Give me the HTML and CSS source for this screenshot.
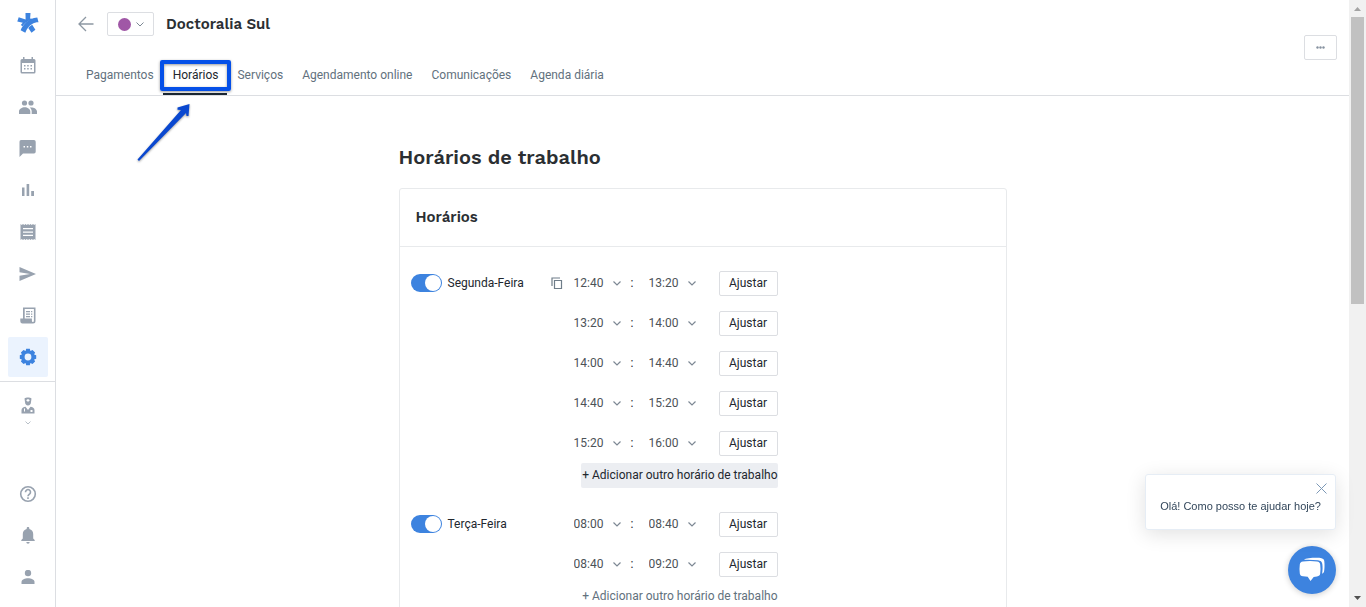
FILE: index.html
```
<!DOCTYPE html>
<html lang="pt-BR">
<head>
  <meta charset="UTF-8" />
  <meta name="viewport" content="width=device-width, initial-scale=1.0"/>
  <title>Doctoralia Sul - Horários</title>
  <link rel="stylesheet" href="styles.css">
</head>
<body>
  <aside class="sidebar">
    <a class="logo" href="#" aria-label="Início">
      <svg width="22" height="22" viewBox="0 0 22 22" fill="#3d83df">
        <path d="M8.500 1h5l-.4 5.800 1.400-.5-.3 1.500C10 9.300 7.500 11.500 5.500 14.300L3.800 13l2-2.300L.3 9.600l1.400-4.400 6.900 2.300z"/>
        <path d="M20.300 5.500l1.200 4.800c-2.500 0-4.700.6-6.300 1.600-3.200 2-5.200 4.300-6.900 8.800L3.600 18.300C6 12.500 11 6.500 20.300 5.500z"/>
        <path d="M15.200 12.800l3.200 5-3.900 3-3.200-4.700c1-1.500 2.200-2.500 3.900-3.300z"/>
      </svg>
    </a>
    <nav class="side-nav" aria-label="Principal">
      <a href="#" aria-label="Agenda">
        <svg width="16" height="18" viewBox="0 0 16 18"><path fill-rule="evenodd" d="M3 1h1.500v2h7V1H13v2h1a1.500 1.500 0 0 1 1.500 1.500V16a1.500 1.500 0 0 1-1.500 1.500H2A1.500 1.500 0 0 1 .5 16V4.500A1.500 1.500 0 0 1 2 3h1zM2 7v9h12V7z"/><path d="M4 9h1.500v1.500H4zm3.200 0h1.500v1.500H7.200zm3.300 0H12v1.500h-1.500zM4 12h1.500v1.500H4zm3.200 0h1.500v1.500H7.200zm3.300 0H12v1.500h-1.500z"/></svg>
      </a>
      <a href="#" aria-label="Pacientes">
        <svg width="18" height="14" viewBox="0 0 18 14"><circle cx="5.500" cy="3" r="2.600"/><circle cx="12" cy="3" r="2.600"/><path d="M0 14v-2.500C0 9 3 7.300 5.700 7.300S11.300 9 11.300 11.500V14zM12.700 14v-2.500c0-1.700-.8-3-2-4 3.300-.6 7.300 1 7.300 4V14z"/></svg>
      </a>
      <a href="#" aria-label="Mensagens">
        <svg width="17" height="17" viewBox="0 0 17 17"><path fill-rule="evenodd" d="M2 0h13a1.700 1.700 0 0 1 1.700 1.700v10A1.700 1.700 0 0 1 15 13.400H4L.5 17V1.700A1.700 1.700 0 0 1 2 0zm2.500 6v1.500H6V6zm3.300 0v1.500h1.500V6zM11 6v1.500h1.500V6z"/></svg>
      </a>
      <a href="#" aria-label="Estatísticas">
        <svg width="12" height="12" viewBox="0 0 12 12"><path d="M0 3.500h2.500V12H0zM4.600 0h2.600v12H4.600zM9.200 7H12v5H9.200z"/></svg>
      </a>
      <a href="#" aria-label="Faturas">
        <svg width="16" height="16" viewBox="0 0 16 16"><path fill-rule="evenodd" d="M.5 0l1.300 1L3 0l1.300 1 1.200-1 1.300 1L8 0l1.300 1 1.200-1 1.300 1L13 0l1.200 1 1.300-1v16l-1.300-1-1.200 1-1.200-1-1.300 1-1.200-1L8 16l-1.200-1-1.300 1-1.200-1L3 16l-1.200-1-1.300 1zM3 4v1.300h10V4zm0 3.400v1.300h10V7.400zm0 3.300V12h10v-1.300z"/></svg>
      </a>
      <a href="#" aria-label="Campanhas">
        <svg width="17" height="14" viewBox="0 0 17 14"><path d="M.5 0L17 7 .5 14V8.700L11 7 .5 5.300z"/></svg>
      </a>
      <a href="#" aria-label="Relatórios">
        <svg width="16" height="17" viewBox="0 0 16 17"><path fill-rule="evenodd" d="M3 .5h12.500V14a2.500 2.500 0 0 1-2.500 2.500H2.500A2.200 2.200 0 0 1 .3 14.300V11.500H3zM4.700 2v9.500h7.200V14a1 1 0 0 0 2 0V2z"/><path d="M6 4h4v1.300H6zm5 0h1.300v1.300H11zM6 6.500h4v1.300H6zm5 0h1.300v1.300H11zM6 9h4v1.300H6zm5 0h1.300v1.300H11z"/></svg>
      </a>
      <a class="active" href="#" aria-label="Configurações">
        <svg width="18" height="18" viewBox="0 0 18 18"><path fill-rule="evenodd" d="M7.200.8h3.600l.6 2.100 2.100-1 2.600 2.600-1 2.100 2.100.6v3.600l-2.100.6 1 2.100-2.600 2.600-2.100-1-.6 2.100H7.200l-.6-2.100-2.100 1-2.600-2.600 1-2.100-2.100-.6V7.200l2.100-.6-1-2.100 2.600-2.600 2.100 1zM9 5.600a3.400 3.400 0 1 0 0 6.800 3.400 3.400 0 0 0 0-6.800z"/></svg>
      </a>
    </nav>
    <a class="doctor" href="#" aria-label="Profissional">
      <svg width="14" height="17" viewBox="0 0 14 17"><path fill-rule="evenodd" d="M3.500 1.500C5 .3 9 .3 10.500 1.500L10 5c0 2-1.300 3.600-3 3.600S4 7 4 5zM6.400 2v.8h-.9V4h.9v.8h1.200V4h.9V2.800h-.9V2z"/><path fill-rule="evenodd" d="M.5 16.500V13c0-2 2-2.900 4-3.200L7 13l2.500-3.200c2 .3 4 1.200 4 3.200v3.500zM3 11.500v3h1v-3zm6.500 1.500v2h2v-2z"/></svg>
      <svg class="caret" width="6" height="4" viewBox="0 0 6 4"><path d="M.5.5L3 3 5.500.5"/></svg>
    </a>
    <nav class="side-bottom" aria-label="Conta">
      <a href="#" aria-label="Ajuda">
        <svg width="18" height="18" viewBox="0 0 18 18" class="outline"><circle cx="9" cy="9" r="7.300"/><path d="M6.500 7.200a2.500 2.500 0 1 1 4.200 1.700c-.9.800-1.700 1.100-1.700 2.400M9 12.300v1.700"/></svg>
      </a>
      <a href="#" aria-label="Notificações">
        <svg width="14" height="17" viewBox="0 0 14 17"><path d="M7 0c.8 0 1.300.5 1.300 1.300v.6c2.500.6 3.900 2.600 3.900 5.100v4.500l1.500 1.600v.9H.3v-.9l1.500-1.600V7c0-2.500 1.400-4.500 3.900-5.100v-.6C5.700.5 6.200 0 7 0zM5.300 15h3.400a1.700 1.700 0 0 1-3.400 0z"/></svg>
      </a>
      <a href="#" aria-label="Perfil">
        <svg width="14" height="14" viewBox="0 0 14 14"><circle cx="7" cy="3" r="3.200"/><path d="M.5 14v-2C.5 9.500 4 8.300 7 8.300S13.500 9.500 13.500 12v2z"/></svg>
      </a>
    </nav>
  </aside>

  <div class="content">
    <header class="header">
      <div class="header-main">
        <div class="title-bar">
          <a class="back" href="#" aria-label="Voltar">
            <svg width="16" height="16" viewBox="0 0 16 16"><path d="M15.500 8H1.500M8 1L1 8l7 7"/></svg>
          </a>
          <button class="color-picker" type="button" aria-label="Cor da agenda">
            <span class="dot"></span>
            <svg width="8" height="5" viewBox="0 0 8 5"><path d="M.5.500L4 4 7.500.500"/></svg>
          </button>
          <h1>Doctoralia Sul</h1>
        </div>
        <nav class="tabs" aria-label="Seções">
          <a href="#">Pagamentos</a>
          <a class="active" href="#">Horários</a>
          <a href="#">Serviços</a>
          <a href="#">Agendamento online</a>
          <a href="#">Comunicações</a>
          <a href="#">Agenda diária</a>
        </nav>
      </div>
      <button class="more" type="button" aria-label="Mais opções">
        <svg width="9" height="3" viewBox="0 0 9 3"><circle cx="1.500" cy="1.500" r="1.200"/><circle cx="4.500" cy="1.500" r="1.200"/><circle cx="7.500" cy="1.500" r="1.200"/></svg>
      </button>
    </header>

    <main class="page">
      <h2>Horários de trabalho</h2>
      <section class="card">
        <h3>Horários</h3>
        <div class="days">
          <div class="day">
            <div class="day-head">
              <input class="toggle" type="checkbox" id="seg" checked>
              <label for="seg">Segunda-Feira</label>
              <button class="copy" type="button" aria-label="Copiar horários">
                <svg width="12" height="12" viewBox="0 0 12 12"><path d="M1 9V1h8M3.500 3.500h7v8h-7z"/></svg>
              </button>
            </div>
            <div class="slots">
              <div class="slot">
                <select aria-label="Início"><option>12:40</option></select>
                <span>:</span>
                <select aria-label="Fim"><option>13:20</option></select>
                <button class="adjust" type="button">Ajustar</button>
              </div>
              <div class="slot">
                <select aria-label="Início"><option>13:20</option></select>
                <span>:</span>
                <select aria-label="Fim"><option>14:00</option></select>
                <button class="adjust" type="button">Ajustar</button>
              </div>
              <div class="slot">
                <select aria-label="Início"><option>14:00</option></select>
                <span>:</span>
                <select aria-label="Fim"><option>14:40</option></select>
                <button class="adjust" type="button">Ajustar</button>
              </div>
              <div class="slot">
                <select aria-label="Início"><option>14:40</option></select>
                <span>:</span>
                <select aria-label="Fim"><option>15:20</option></select>
                <button class="adjust" type="button">Ajustar</button>
              </div>
              <div class="slot">
                <select aria-label="Início"><option>15:20</option></select>
                <span>:</span>
                <select aria-label="Fim"><option>16:00</option></select>
                <button class="adjust" type="button">Ajustar</button>
              </div>
              <button class="add hover" type="button">+ Adicionar outro horário de trabalho</button>
            </div>
          </div>

          <div class="day">
            <div class="day-head">
              <input class="toggle" type="checkbox" id="ter" checked>
              <label for="ter">Terça-Feira</label>
            </div>
            <div class="slots">
              <div class="slot">
                <select aria-label="Início"><option>08:00</option></select>
                <span>:</span>
                <select aria-label="Fim"><option>08:40</option></select>
                <button class="adjust" type="button">Ajustar</button>
              </div>
              <div class="slot">
                <select aria-label="Início"><option>08:40</option></select>
                <span>:</span>
                <select aria-label="Fim"><option>09:20</option></select>
                <button class="adjust" type="button">Ajustar</button>
              </div>
              <button class="add" type="button">+ Adicionar outro horário de trabalho</button>
            </div>
          </div>
        </div>
      </section>
    </main>
  </div>

  <div class="scrollbar" aria-hidden="true">
    <svg width="7" height="4" viewBox="0 0 7 4"><path d="M0 4L3.500 0 7 4z" fill="#a3a3a3"/></svg>
    <div class="track"><div class="thumb"></div></div>
    <svg width="7" height="4" viewBox="0 0 7 4"><path d="M0 0h7L3.500 4z" fill="#505050"/></svg>
  </div>

  <!-- tutorial highlight -->
  <div class="highlight"></div>
  <svg class="arrow" width="60" height="64" viewBox="0 0 60 64">
    <path d="M4.500 58.500L48 9l-3.500-.2V6.500L56.500 3 55.500 15h-2l-.5-3L6 60z" fill="#0a48d0"/>
  </svg>

  <div class="chat">
    <div class="chat-message">
      <button class="chat-close" type="button" aria-label="Fechar">
        <svg width="11" height="11" viewBox="0 0 11 11"><path d="M.5.500l10 10M10.500.500l-10 10"/></svg>
      </button>
      <p>Olá! Como posso te ajudar hoje?</p>
    </div>
    <button class="chat-launcher" type="button" aria-label="Abrir chat">
      <svg width="26" height="26" viewBox="0 0 26 26" fill="#fff">
        <path d="M4 4.500c4-.7 10-.7 14 0 2 .3 3 1.300 3.200 3 .4 3 .4 6 0 9-.2 1.700-1.200 2.600-3.200 3-1.300.2-2.300.3-3.300.4L11.500 24l-2.800-4.200-4.700-.5c-2-.3-3-1.200-3.200-2.800-.4-3-.4-6 0-9C1 5.800 2 4.800 4 4.500z"/>
        <path d="M5 2.800C7 .8 19 .4 22.500 1.200c1.800.4 2.600 1.300 2.800 3 .4 3.500.3 7-.2 10-.2 1.200-.8 2-2 2.500.6-4 .6-7 .2-9.800-.3-2.300-1.800-3.400-4.300-3.700C14.500 2.700 9 2.500 5 2.800z"/>
      </svg>
    </button>
  </div>
</body>
</html>
```
FILE: styles.css
```
:root {
  --blue: #3d83df;
  --gray: #98a2af;
  --border: #dcdee2;
  --text: #22272e;
  --muted: #62717d;
}

* {
  box-sizing: border-box;
}

body {
  margin: 0;
  display: flex;
  height: 100vh;
  overflow: hidden;
  background: #fff;
  color: var(--text);
  font-family: Roboto, sans-serif;
  font-size: 12px;
  line-height: 16px;
}

a {
  color: inherit;
  text-decoration: none;
}

button {
  padding: 0;
  border: 0;
  background: none;
  color: inherit;
  font: inherit;
  cursor: pointer;
}

svg {
  display: block;
}

h1, h2, h3 {
  margin: 0;
  color: #2b2f33;
  font-family: "Work Sans", Inter, sans-serif;
  font-weight: 600;
}

/* sidebar */
.sidebar {
  flex: none;
  width: 56px;
  display: flex;
  flex-direction: column;
  border-right: 1px solid var(--border);
  fill: var(--gray);
}

.logo {
  padding: 12px 16px 11px 17px;
}

.side-nav,
.side-bottom {
  display: flex;
  flex-direction: column;
  justify-content: space-between;
  align-items: center;
}

.side-nav {
  height: 332px;
}

.side-nav a,
.side-bottom a {
  width: 40px;
  height: 40px;
  display: flex;
  align-items: center;
  justify-content: center;
}

.side-nav a.active {
  background: #ebf3fe;
  border-radius: 2px;
  fill: var(--blue);
}

.doctor {
  margin-top: 4px;
  padding-top: 15px;
  border-top: 1px solid var(--border);
  display: flex;
  flex-direction: column;
  align-items: center;
  gap: 7px;
}

.caret {
  fill: none;
  stroke: #b8c0c8;
}

.side-bottom {
  height: 123px;
  margin-top: auto;
  margin-bottom: 10px;
}

.outline {
  fill: none;
  stroke: var(--gray);
  stroke-width: 1.6;
}

/* header */
.content {
  flex: 1;
  min-width: 0;
  overflow: hidden;
}

.header {
  display: flex;
  justify-content: space-between;
  align-items: center;
  padding: 0 12px 0 20px;
  border-bottom: 1px solid var(--border);
}

.title-bar {
  display: flex;
  align-items: center;
  height: 48px;
}

.back {
  margin: 0 13px 0 2px;
}

.back svg {
  fill: none;
  stroke: #8d98a3;
  stroke-width: 1.3;
}

.color-picker {
  width: 47px;
  height: 24px;
  display: flex;
  align-items: center;
  justify-content: center;
  gap: 5px;
  border: 1px solid var(--border);
  border-radius: 2px;
}

.color-picker svg {
  fill: none;
  stroke: #7d8894;
}

.dot {
  width: 13px;
  height: 13px;
  border-radius: 50%;
  background: #a057a6;
}

h1 {
  margin-left: 12px;
  font-size: 15px;
  line-height: 24px;
}

.tabs {
  display: flex;
  color: var(--muted);
}

.tabs a {
  height: 47px;
  padding: 19px 9px 0 10px;
  border-bottom: 2px solid transparent;
}

.tabs a.active {
  color: var(--text);
  border-color: #1b2733;
}

.more {
  width: 33px;
  height: 25px;
  display: flex;
  align-items: center;
  justify-content: center;
  border: 1px solid var(--border);
  border-radius: 2px;
  fill: #8792a0;
}

/* working hours */
.page {
  max-width: 608px;
  margin: 0 auto;
  padding-top: 48px;
}

h2 {
  font-size: 20px;
  line-height: 26px;
}

.card {
  margin-top: 18px;
  border: 1px solid #e8eaec;
  border-radius: 3px;
}

h3 {
  padding: 16px;
  border-bottom: 1px solid #e8eaec;
  font-size: 15px;
  line-height: 25px;
}

.days {
  padding: 16px 11px;
}

.day {
  display: flex;
  margin-bottom: 16px;
}

.day-head {
  width: 163px;
  height: 40px;
  padding-right: 11px;
  display: flex;
  align-items: center;
  gap: 6px;
}

.toggle {
  appearance: none;
  flex: none;
  width: 31px;
  height: 18px;
  margin: 0;
  padding: 1px;
  border-radius: 9px;
  background: #c4cbd2;
  cursor: pointer;
}

.toggle::before {
  content: "";
  display: block;
  width: 16px;
  height: 16px;
  border-radius: 50%;
  background: #fff;
}

.toggle:checked {
  background: var(--blue);
}

.toggle:checked::before {
  margin-left: auto;
}

.copy {
  margin-left: auto;
}

.copy svg {
  fill: none;
  stroke: #6f7d89;
  stroke-width: 1.2;
}

.slots {
  display: flex;
  flex-direction: column;
  align-items: flex-end;
}

.slot {
  height: 40px;
  display: flex;
  align-items: center;
}

.slot select {
  appearance: none;
  width: 47px;
  height: 24px;
  padding: 0;
  border: 0;
  color: #4c5257;
  font: inherit;
  background: url("data:image/svg+xml,%3Csvg xmlns='http://www.w3.org/2000/svg' width='8' height='5' fill='none' stroke='%237d8894' stroke-width='1.2'%3E%3Cpath d='M.5.5L4 4 7.500.5'/%3E%3C/svg%3E") no-repeat right center;
}

.slot span {
  width: 28px;
  padding-left: 10px;
}

.adjust {
  width: 59px;
  height: 25px;
  margin-left: 23px;
  border: 1px solid var(--border);
  border-radius: 2px;
}

.add {
  height: 25px;
  padding: 0 0 2px 1px;
  border-radius: 2px;
  color: var(--muted);
}

.add:hover,
.add.hover {
  background: #eceef2;
  color: var(--text);
}

/* scrollbar */
.scrollbar {
  flex: none;
  width: 17px;
  padding: 7px 0;
  display: flex;
  flex-direction: column;
  align-items: center;
  gap: 6px;
  background: #f1f1f1;
}

.track {
  flex: 1;
  width: 13px;
}

.thumb {
  height: 50%;
  background: #c1c1c1;
}

/* overlays */
.highlight {
  position: absolute;
  left: 160px;
  top: 60px;
  width: 71px;
  height: 31px;
  border: 4px solid #0550e8;
  border-radius: 2px;
  box-shadow: 0 1px 3px rgba(0, 0, 0, 0.4), inset 0 1px 3px rgba(0, 0, 0, 0.4);
  pointer-events: none;
}

.arrow {
  position: absolute;
  left: 133px;
  top: 101px;
  filter: drop-shadow(0 1px 1px rgba(0, 0, 0, 0.4));
  pointer-events: none;
}

.chat {
  position: fixed;
  right: 30px;
  bottom: 13px;
  display: flex;
  flex-direction: column;
  align-items: flex-end;
  gap: 16px;
}

.chat-message {
  position: relative;
  padding: 23px 14px 15px;
  border: 1px solid #e6edf5;
  border-radius: 3px;
  background: #fff;
  box-shadow: 0 4px 20px rgba(0, 0, 0, 0.12);
  color: #33475b;
  font-family: "Liberation Sans", Arial, sans-serif;
  font-size: 11px;
}

.chat-message p {
  margin: 0;
}

.chat-close {
  position: absolute;
  top: 8px;
  right: 8px;
}

.chat-close svg {
  fill: none;
  stroke: #7c98b6;
}

.chat-launcher {
  width: 48px;
  height: 48px;
  display: flex;
  align-items: center;
  justify-content: center;
  border-radius: 50%;
  background: var(--blue);
  box-shadow: 0 1px 6px rgba(0, 0, 0, 0.2);
}
```
